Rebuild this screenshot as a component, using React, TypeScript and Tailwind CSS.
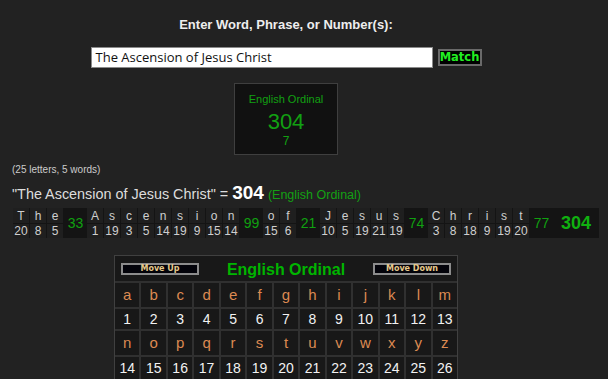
import React from "react";

const words: { letters: [string, number][]; sum: number }[] = [
  { letters: [["T", 20], ["h", 8], ["e", 5]], sum: 33 },
  {
    letters: [["A", 1], ["s", 19], ["c", 3], ["e", 5], ["n", 14], ["s", 19], ["i", 9], ["o", 15], ["n", 14]],
    sum: 99,
  },
  { letters: [["o", 15], ["f", 6]], sum: 21 },
  { letters: [["J", 10], ["e", 5], ["s", 19], ["u", 21], ["s", 19]], sum: 74 },
  { letters: [["C", 3], ["h", 8], ["r", 18], ["i", 9], ["s", 19], ["t", 20]], sum: 77 },
];

const row1 = "abcdefghijklm".split("");
const row2 = "nopqrstuvwxyz".split("");

function LetterCell({ ch, cls }: { ch: string; cls: string }) {
  return <div className={`bg-[#181818] flex items-center justify-center ${cls}`}>{ch}</div>;
}

export default function App() {
  return (
    <div className="min-h-screen w-full bg-[#222222] overflow-hidden" style={{ fontFamily: '"Liberation Sans", Arial, sans-serif' }}>
      <div className="w-[572px] flex flex-col">
        <div className="pt-[17px] text-center text-[13px] leading-[16px] font-bold text-[#eeeeee]">
          Enter Word, Phrase, or Number(s):
        </div>
        <div className="mt-[14px] flex items-center justify-center gap-[5px]">
          <div
            className="w-[342px] h-[21px] bg-white border border-[#8a8a8a] flex items-center pl-[4px] text-[13px] text-[#111]"
            style={{ fontFamily: '"Open Sans", sans-serif' }}
          >
            The Ascension of Jesus Christ
          </div>
          <div
            className="w-[44px] h-[17px] bg-black border-2 border-[#6a6a6a] flex items-center justify-center text-[11.5px] font-bold text-[#22ee22]"
            style={{ fontFamily: '"DejaVu Sans", sans-serif' }}
          >
            Match
          </div>
        </div>
        <div className="mt-[15px] mx-auto w-[104px] h-[72px] bg-[#111111] border border-[#3f3f3f] flex flex-col items-center text-[#12a012]">
          <div className="pt-[9px] text-[11px] leading-[13px]">English Ordinal</div>
          <div className="mt-[4px] text-[22px] leading-[24px]">304</div>
          <div className="text-[12px] leading-[14px]">7</div>
        </div>
        <div className="mt-[9px] pl-[12px] text-[10px] leading-[12px] text-[#cccccc]">(25 letters, 5 words)</div>
        <div className="mt-[7px] pl-[12px] leading-[20px] text-[14.4px] text-[#dddddd] whitespace-nowrap">
          "The Ascension of Jesus Christ" = <span className="text-[19px] font-bold text-white">304</span>{" "}
          <span className="text-[12.5px] text-[#14a014]">(English Ordinal)</span>
        </div>
        <div className="mt-[3px] ml-[13px] w-max flex bg-[#141414] h-[30px] text-[12px] text-[#cfcfcf]">
          {words.map((w, wi) => (
            <React.Fragment key={wi}>
              {w.letters.map(([l, n], li) => (
                <div key={li} className="w-[17px] flex flex-col gap-[1px] pr-[1px]">
                  <div className="bg-[#1f1f1f] h-[15px] flex items-center justify-center leading-none">{l}</div>
                  <div className="bg-[#1f1f1f] flex-1 flex items-center justify-center leading-none">{n}</div>
                </div>
              ))}
              <div className="w-[23px] flex items-center justify-center text-[14px] text-[#10a010]">{w.sum}</div>
            </React.Fragment>
          ))}
          <div className="w-[46px] flex items-center justify-center text-[18px] font-bold text-[#10b010]">304</div>
        </div>
        <div className="mt-[17px] mx-auto w-[344px] border border-[#404040] bg-[#303030] flex flex-col gap-[2px]">
          <div className="h-[25px] bg-[#181818] flex items-center justify-between px-[6px]">
            <div
              className="w-[78px] h-[12px] bg-[#03030a] border-2 border-[#8c8c8c] flex items-center justify-center text-[8px] font-bold text-[#e6c98a]"
              style={{ fontFamily: '"DejaVu Sans", sans-serif' }}
            >
              Move Up
            </div>
            <div className="text-[16px] font-bold text-[#00b400] leading-none pt-[2px]">English Ordinal</div>
            <div
              className="w-[78px] h-[12px] bg-[#03030a] border-2 border-[#8c8c8c] flex items-center justify-center text-[8px] font-bold text-[#e6c98a]"
              style={{ fontFamily: '"DejaVu Sans", sans-serif' }}
            >
              Move Down
            </div>
          </div>
          <div className="grid grid-cols-[repeat(13,minmax(0,1fr))] gap-[2px]">
            {row1.map((c) => (
              <LetterCell key={c} ch={c} cls="h-[24px] text-[15px] text-[#dc8a52]" />
            ))}
            {row1.map((c, i) => (
              <LetterCell key={c + "n"} ch={String(i + 1)} cls="h-[20px] text-[14px] text-[#f2f2f2]" />
            ))}
            {row2.map((c) => (
              <LetterCell key={c} ch={c} cls="h-[24px] text-[15px] text-[#dc8a52]" />
            ))}
            {row2.map((c, i) => (
              <LetterCell key={c + "n"} ch={String(i + 14)} cls="h-[22px] text-[14px] text-[#f2f2f2]" />
            ))}
          </div>
        </div>
      </div>
    </div>
  );
}
